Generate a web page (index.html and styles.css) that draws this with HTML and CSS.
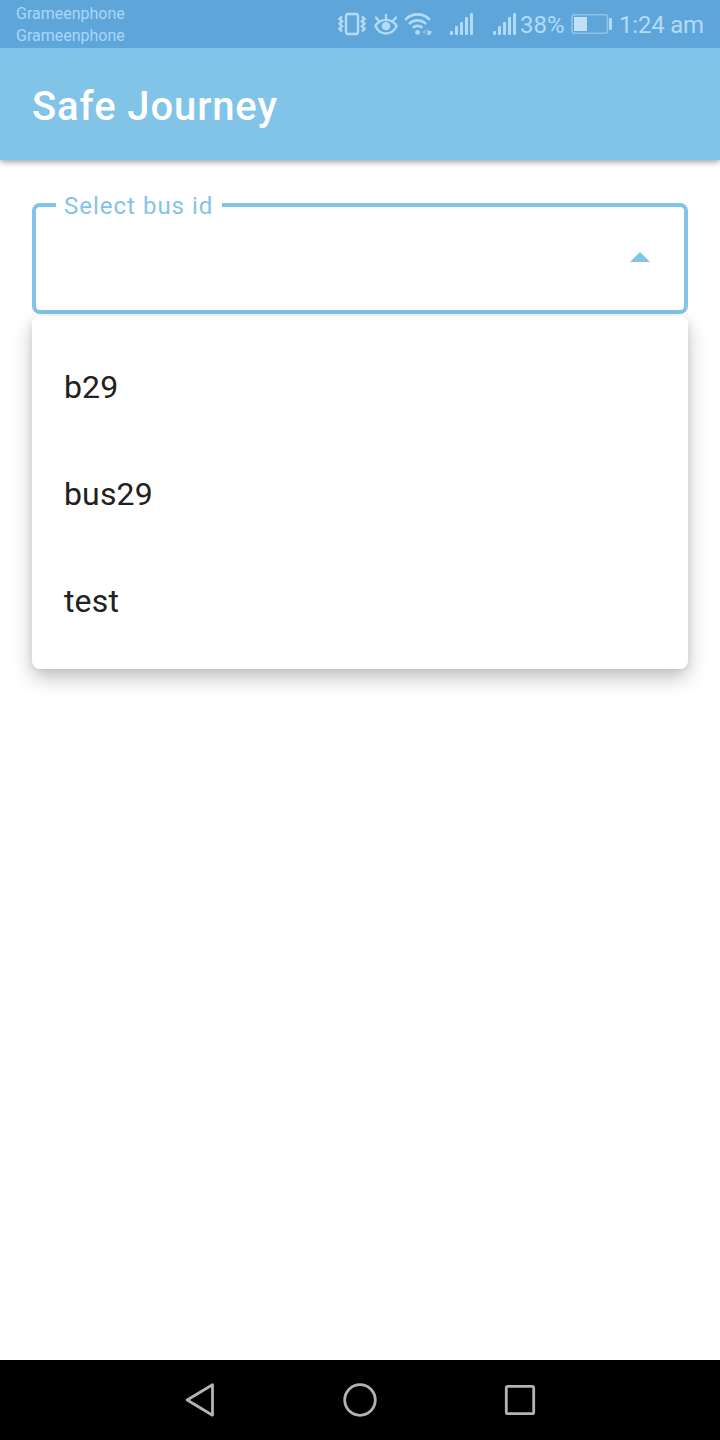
FILE: index.html
```html
<!DOCTYPE html>
<html lang="en">
<head>
<meta charset="utf-8">
<title>Safe Journey</title>
<link rel="stylesheet" href="styles.css">
</head>
<body>
<div class="screen">
  <div class="status">
    <div class="carriers"><span>Grameenphone</span><span>Grameenphone</span></div>
    <div class="indicators">
      <svg class="vibrate" width="28" height="24" viewBox="0 0 28 24" fill="none" stroke="currentColor">
        <rect x="8" y="2" width="12" height="20" rx="2.2" stroke-width="2.4"/>
        <path d="M4 4.500 1.500 7 4 9.300 1.500 11.800 4 14.200 1.500 16.700 4 19.500M24 4.500 26.500 7 24 9.300 26.500 11.800 24 14.200 26.500 16.700 24 19.500" stroke-width="2.500"/>
      </svg>
      <svg class="eye" width="26" height="24" viewBox="0 0 26 24" fill="none" stroke="currentColor" stroke-width="2.300" stroke-linecap="round">
        <path d="M2.300 14C7.500 5.800 18.500 5.800 23.700 14C18.500 24 7.500 24 2.300 14Z"/>
        <path d="M13 7V2.800M5.800 8.800 3 5.500M20.200 8.800 23 5.500"/>
        <circle cx="13" cy="14" r="4.300" fill="currentColor" stroke="none"/>
      </svg>
      <svg class="wifi" width="28" height="24" viewBox="0 0 28 24" fill="none" stroke="currentColor" stroke-width="2.600">
        <path d="M1.200 7.800C8 .6 19 .6 25.800 7.800M5 12C9.800 7.200 17.200 7.200 22 12M8.700 15.800C11.500 13.200 15.500 13.200 18.300 15.800"/>
        <circle cx="13.500" cy="20.300" r="2.400" fill="currentColor" stroke="none"/>
        <path d="M22 17v6l-4-3Z" fill="currentColor" stroke="none" opacity=".4"/>
        <path d="M23.500 23v-6l1.500 2h2.500v1.500L25.500 23Z" fill="currentColor" stroke="none"/>
      </svg>
      <svg class="signal first" width="24" height="24" viewBox="0 0 24 24" fill="currentColor">
        <rect x="0" y="19" width="3" height="4" rx="1"/><rect x="5" y="14" width="3" height="9" rx="1"/><rect x="10" y="10" width="3" height="13" rx="1"/><rect x="15" y="5" width="3" height="18" rx="1"/><rect x="20" y="1" width="3" height="22" rx="1"/>
      </svg>
      <svg class="signal second" width="24" height="24" viewBox="0 0 24 24" fill="currentColor">
        <rect x="0" y="19" width="3" height="4" rx="1"/><rect x="5" y="14" width="3" height="9" rx="1"/><rect x="10" y="10" width="3" height="13" rx="1"/><rect x="15" y="5" width="3" height="18" rx="1"/><rect x="20" y="1" width="3" height="22" rx="1"/>
      </svg>
      <span class="percent">38%</span>
      <svg class="battery" width="41" height="24" viewBox="0 0 41 24">
        <rect x="1" y="2.800" width="35.500" height="18.400" rx="2.500" fill="none" stroke="#8cc4ec" stroke-width="1.600"/>
        <rect x="3" y="5" width="13" height="14" fill="#c1dff5"/>
        <rect x="38" y="6" width="3" height="12" rx="1" fill="#b2dbf7"/>
      </svg>
      <span class="clock">1:24 am</span>
    </div>
  </div>
  <header class="appbar"><h1>Safe Journey</h1></header>
  <main class="content">
    <fieldset class="select">
      <legend>Select bus id</legend>
      <svg class="arrow" width="20" height="10" viewBox="0 0 20 10"><path d="M0 10 10 0 20 10Z" fill="#82c4e8"/></svg>
    </fieldset>
    <ul class="menu"><li>b29</li><li>bus29</li><li>test</li></ul>
  </main>
  <nav class="navbar">
    <svg width="40" height="40" viewBox="0 0 40 40"><path d="M32.500 4.800V35.200L7.200 20Z"/></svg>
    <svg width="40" height="40" viewBox="0 0 40 40"><circle cx="20" cy="20" r="15.300"/></svg>
    <svg width="40" height="40" viewBox="0 0 40 40"><rect x="6.300" y="6.300" width="27.400" height="27.400" rx="1.500"/></svg>
  </nav>
</div>
</body>
</html>
```
FILE: styles.css
```css
* { box-sizing: border-box; }
body { margin: 0; font-family: Roboto, sans-serif; }
.screen { width: 720px; height: 1440px; display: flex; flex-direction: column; background: #fff; overflow: hidden; }
.status { position: relative; z-index: 1; height: 48px; flex: none; display: flex; justify-content: space-between; background: #5ea6da; color: #b2dbf7; padding: 0 16px; }
.carriers { display: flex; flex-direction: column; font-size: 16px; line-height: 22px; padding-top: 3px; color: #aad7f7; }
.indicators { display: flex; align-items: center; font-size: 24px; line-height: 48px; white-space: nowrap; }
.indicators svg { display: block; flex: none; }
.eye { margin-left: 7px; }
.wifi { margin-left: 5px; }
.first { margin-left: 18px; }
.second { margin-left: 19px; }
.percent { width: 48px; margin-left: 3px; padding-top: 2px; }
.battery { margin-left: 3px; }
.clock { width: 85px; margin-left: 7px; padding-top: 2px; letter-spacing: -.2px; }
.appbar { height: 112px; flex: none; display: flex; align-items: center; padding: 6px 32px 0; background: #82c4e8; box-shadow: 0 2px 6px rgba(0, 0, 0, .38); }
.appbar h1 { margin: 0; font-size: 40px; font-weight: 500; line-height: 48px; letter-spacing: .9px; color: #fff; }
.content { flex: 1; padding: 32px 32px 0; }
.select { display: flex; justify-content: flex-end; height: 122px; margin: 0; padding: 0 34px 0 20px; border: 4px solid #82c4e8; border-radius: 8px; }
.select legend { height: 26px; padding: 0 9px 0 8px; font-size: 24px; line-height: 28px; letter-spacing: 1px; color: #82c4e8; }
.arrow { display: block; margin-top: 34px; }
.menu { position: relative; list-style: none; margin: 2px 0 0; padding: 16px 0; background: #fff; border-radius: 8px; box-shadow: 0 9px 20px rgba(0, 0, 0, .24), 0 1px 8px rgba(0, 0, 0, .07); }
.menu li { height: 107px; padding-left: 32px; font-size: 32px; line-height: 110px; letter-spacing: .15px; color: #212121; }
.navbar { height: 80px; flex: none; display: flex; justify-content: center; align-items: center; gap: 120px; background: #000; }
.navbar svg { fill: none; stroke: #b3b3b3; stroke-width: 2.8; stroke-linejoin: round; }
```
